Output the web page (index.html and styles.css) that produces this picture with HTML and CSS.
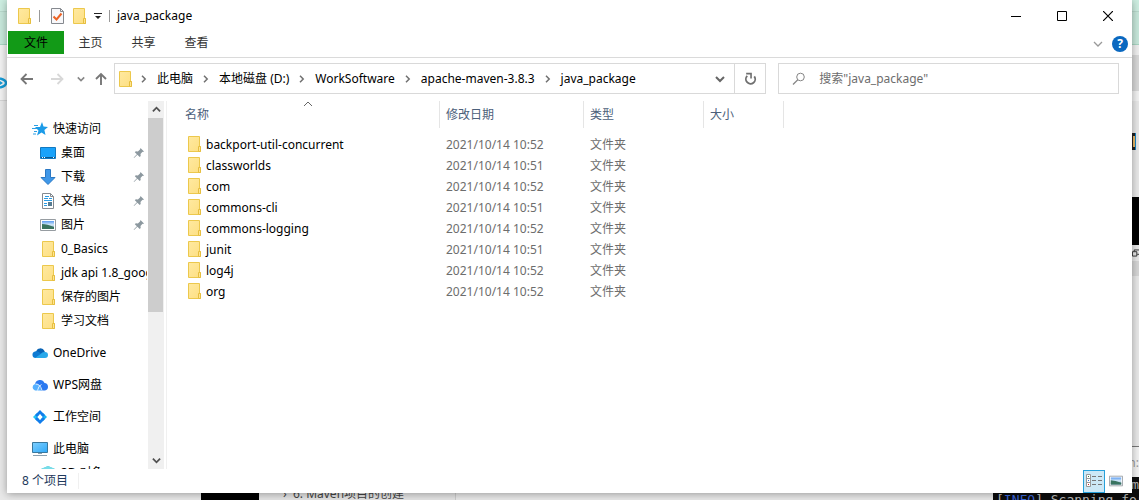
FILE: index.html
```html
<!DOCTYPE html>
<html lang="zh-CN">
<head>
<meta charset="utf-8">
<title>java_package</title>
<link rel="stylesheet" href="styles.css">
</head>
<body>
<svg class="defs" aria-hidden="true">
  <defs>
    <linearGradient id="fold" x1="0" y1="0" x2="1" y2="1"><stop offset="0" stop-color="#ffe9a0"/><stop offset="1" stop-color="#fddf82"/></linearGradient>
    <linearGradient id="sky" x1="0" y1="0" x2="0" y2="1"><stop offset="0" stop-color="#5b9bf0"/><stop offset=".5" stop-color="#d8ecf8"/><stop offset="1" stop-color="#3d6f8e"/></linearGradient>
    <linearGradient id="screen" x1="0" y1="0" x2="1" y2="1"><stop offset="0" stop-color="#7fd0ff"/><stop offset="1" stop-color="#2fa8f8"/></linearGradient>
    <symbol id="folder" viewBox="0 0 16 16"><path d="M2.500.500h11v10h1v5h-12z" fill="url(#fold)" stroke="#ecc84c"/><path d="M12.500 15.500v-5h2v5z" fill="#ffe591" stroke="#e6be40"/></symbol>
    <symbol id="pin" viewBox="0 0 12 12"><path d="M7.500 1l3.500 3.500-1 .5-.5-.2-2 2.200.2 2-1 1-2.300-2.300L1 11l-.3-.4L3.900 7.300 1.800 5.200l1-1 2.100.2L7 2.500z" fill="#8c989f"/></symbol>
    <symbol id="sep" viewBox="0 0 8 8"><path d="M2 .8L5.200 4 2 7.200" fill="none" stroke="#707070" stroke-width="1.500"/></symbol>
    <symbol id="down" viewBox="0 0 10 10"><path d="M1 3l4 4 4-4" fill="none" stroke="currentColor" stroke-width="2"/></symbol>
    <symbol id="picture" viewBox="0 0 16 16"><path d="M.5 2.500h15v11H.5z" fill="#fff" stroke="#969ca1"/><path d="M2 4h12v8H2z" fill="url(#sky)"/><path d="M2 7q5 0 12 3v2H2z" fill="#39735f"/></symbol>
  </defs>
</svg>
<div class="desktop">
  <div class="left-page"></div>
  <svg class="left-logo" viewBox="0 0 8 14" aria-hidden="true"><path d="M0 2.500q6 1.500 6 4.500t-6 4.500" fill="none" stroke="#149bd7" stroke-width="2.500"/><path d="M0 5l3 2-3 2z" fill="#149bd7"/></svg>
  <div class="right-page"></div>
  <div class="right-tile"></div>
  <div class="right-block"></div>
  <svg class="right-copy" viewBox="0 0 8 8" aria-hidden="true"><path d="M.5 2.500h5v5h-5zM2.500 2V.5H8M6 5.500h2" fill="none" stroke="#222"/></svg>
  <div class="bottom-block"></div>
  <div class="bottom-note">&#8250;&nbsp; 6. Maven项目的创建</div>
  <div class="terminal">
    <div class="terminal-bar">n:</div>
    <div class="terminal-body"><div class="terminal-last">m</div><div>[<b>INFO</b>] Scanning for</div></div>
  </div>

  <main class="window">
    <header class="title-bar">
      <svg class="icon" aria-hidden="true"><use href="#folder"/></svg>
      <i class="rule"></i>
      <button class="plain" aria-label="属性"><svg class="icon" viewBox="0 0 16 16"><path d="M2.500.500h9l3 3v12h-12z" fill="#f8f8fa" stroke="#85898f"/><path d="M11.500.500v3h3" fill="none" stroke="#85898f"/><path d="M4.500 8.500l3 3 5-6" fill="none" stroke="#ec6325" stroke-width="2"/></svg></button>
      <button class="plain new-folder" aria-label="新建文件夹"><svg class="icon"><use href="#folder"/></svg></button>
      <button class="plain customize" aria-label="自定义快速访问工具栏"><svg viewBox="0 0 8 8"><path d="M0 1h8v1H0zM1 4h6L4 7z" fill="#222"/></svg></button>
      <i class="rule"></i>
      <h1>java_package</h1>
      <div class="caption">
        <button aria-label="最小化"><svg viewBox="0 0 10 10"><path d="M0 5.500h10" stroke="#000"/></svg></button>
        <button aria-label="最大化"><svg viewBox="0 0 10 10"><path d="M.5.500h9v9h-9z" fill="none" stroke="#000"/></svg></button>
        <button aria-label="关闭"><svg viewBox="0 0 10 10"><path d="M0 0l10 10M10 0L0 10" stroke="#000" stroke-width="1.200"/></svg></button>
      </div>
    </header>

    <nav class="tabs">
      <button class="file-tab">文件</button>
      <button>主页</button>
      <button>共享</button>
      <button>查看</button>
      <div class="tab-tools">
        <button aria-label="展开功能区"><svg viewBox="0 0 10 10"><path d="M1 3l4 4 4-4" fill="none" stroke="#999" stroke-width="1.300"/></svg></button>
        <button class="help" aria-label="帮助">?</button>
      </div>
    </nav>

    <div class="nav-bar">
      <button class="plain back" aria-label="后退"><svg viewBox="0 0 14 14"><path d="M13 7H2M6.500 2L1.500 7l5 5" fill="none" stroke="#777" stroke-width="1.800"/></svg></button>
      <button class="plain forward" aria-label="前进"><svg viewBox="0 0 14 14"><path d="M1 7h11M7.500 2l5 5-5 5" fill="none" stroke="#d8d8d8" stroke-width="1.800"/></svg></button>
      <button class="plain recent" aria-label="最近浏览的位置"><svg viewBox="0 0 10 10"><use href="#down"/></svg></button>
      <button class="plain up" aria-label="上移"><svg viewBox="0 0 14 14"><path d="M7 13V2M2 7l5-5 5 5" fill="none" stroke="#777" stroke-width="1.900"/></svg></button>
      <div class="address">
        <svg class="icon" aria-hidden="true"><use href="#folder"/></svg>
        <svg class="sep"><use href="#sep"/></svg><a href="#">此电脑</a>
        <svg class="sep"><use href="#sep"/></svg><a href="#">本地磁盘 (D:)</a>
        <svg class="sep"><use href="#sep"/></svg><a href="#">WorkSoftware</a>
        <svg class="sep"><use href="#sep"/></svg><a href="#">apache-maven-3.8.3</a>
        <svg class="sep"><use href="#sep"/></svg><a href="#">java_package</a>
        <button class="plain history" aria-label="以前的位置"><svg viewBox="0 0 10 10"><use href="#down"/></svg></button>
        <button class="plain refresh" aria-label="刷新"><svg viewBox="0 0 12 12"><path d="M3 3.500A4.300 4.300 0 1 0 9.500 4" fill="none" stroke="#707070" stroke-width="1.700"/><path d="M2 1.500h4.500V6" fill="none" stroke="#707070" stroke-width="1.500"/></svg></button>
      </div>
      <label class="search">
        <svg viewBox="0 0 14 14" aria-hidden="true"><circle cx="8.500" cy="5" r="3.800" fill="none" stroke="#858585"/><path d="M5.800 7.800L1 12.500" stroke="#858585" stroke-width="1.200"/></svg>
        <input type="text" aria-label="搜索" placeholder='搜索"java_package"'>
      </label>
    </div>

    <div class="content">
      <aside class="sidebar">
        <ul class="tree">
          <li class="root quick"><svg class="icon" viewBox="0 0 16 16"><path d="M10 1l1.500 4.500 4.500.5-3.600 3 1.100 5L9.500 11.400 5 14.500l1.500-5L3 6h5z" fill="#1b9be8"/><path d="M2 4.500h4M0 7.500h5M2 10.500h3M1 13h3" stroke="#2c9fe4"/></svg><a href="#">快速访问</a></li>
          <li><svg class="icon" viewBox="0 0 16 16"><path d="M.5 2.500h15v11H.5z" fill="#19a2fa" stroke="#1279c0"/><path d="M1 12.500h14" stroke="#07568e"/><path d="M2 12.500h1m1 0h1m8 0h1" stroke="#fff"/></svg><a href="#">桌面</a><svg class="pin"><use href="#pin"/></svg></li>
          <li><svg class="icon" viewBox="0 0 16 16"><path d="M5.500.500h5v8h4.500L8 15.500 1 8.500h4.500z" fill="#3f97e8" stroke="#2a78c4"/></svg><a href="#">下载</a><svg class="pin"><use href="#pin"/></svg></li>
          <li><svg class="icon" viewBox="0 0 16 16"><path d="M2.500.500h8l3 3v12h-11z" fill="#fff" stroke="#848a90"/><path d="M10.500.500v3h3" fill="none" stroke="#848a90"/><path d="M5 3.500h4M4 5.500h4m1 0h3M4 7.500h8M4 10.500h3M4 12.500h3" stroke="#2a9be3"/><path d="M8 9h4v4H8z" fill="#567b91"/></svg><a href="#">文档</a><svg class="pin"><use href="#pin"/></svg></li>
          <li><svg class="icon"><use href="#picture"/></svg><a href="#">图片</a><svg class="pin"><use href="#pin"/></svg></li>
          <li><svg class="icon"><use href="#folder"/></svg><a href="#">0_Basics</a></li>
          <li><svg class="icon"><use href="#folder"/></svg><a href="#">jdk api 1.8_google</a></li>
          <li><svg class="icon"><use href="#folder"/></svg><a href="#">保存的图片</a></li>
          <li><svg class="icon"><use href="#folder"/></svg><a href="#">学习文档</a></li>
          <li class="root"><svg class="icon" viewBox="0 0 16 16"><path d="M4 7a4.500 4.500 0 0 1 8.500-1l1 3-7 3-5-2z" fill="#0863b5"/><path d="M3.500 13A3.300 3.300 0 0 1 3 6.500c3-1 4 1 6 2l-3 4.500z" fill="#0e7ad2"/><path d="M3 13l6-4.300c1-1 2-2 4-1.700a3 3 0 0 1 0 6z" fill="#28a8ea"/></svg><a href="#">OneDrive</a></li>
          <li class="root"><svg class="icon" viewBox="0 0 16 16"><path d="M3 7a5 5 0 0 1 9.500-1 3.800 3.800 0 0 1 .5 7.500H9z" fill="#2b79f0"/><path d="M3 13.500a3.400 3.400 0 0 1 0-6.500c3-.7 5 1 6.500 6.500z" fill="#55b0ff"/><path d="M3.500 7q5 0 6.500 6.500M9.500 7.500q-3 1-4 6" fill="none" stroke="#fff" stroke-width=".8"/></svg><a href="#">WPS网盘</a></li>
          <li class="root"><svg class="icon" viewBox="0 0 16 16"><path d="M1 8l4-4 2 2-2 2 2 2-2 2z" fill="#21c6f5"/><path d="M15 8l-4 4-2-2 2-2-2-2 2-2z" fill="#16b5f2"/><path d="M8 1l5 5-2 2-3-3-3 3-2-2zM8 15l5-5-2-2-3 3-3-3-2 2z" fill="#127deb"/></svg><a href="#">工作空间</a></li>
          <li class="root"><svg class="icon" viewBox="0 0 16 16"><path d="M.5 1.500h15v10H.5z" fill="url(#screen)" stroke="#38789e"/><path d="M6 12.500h4M1 14.500h14" stroke="#8aa0af"/></svg><a href="#">此电脑</a></li>
          <li><svg class="icon" viewBox="0 0 16 16"><path d="M8 1l7 3v8l-7 3-7-3V4z" fill="#49c4d8"/><path d="M8 1l7 3-7 3-7-3z" fill="#78dde8"/></svg><a href="#">3D 对象</a></li>
        </ul>
        <div class="scrollbar">
          <button class="plain" aria-label="向上滚动"><svg viewBox="0 0 10 10"><path d="M1 7l4-4 4 4" fill="none" stroke="#505050" stroke-width="2"/></svg></button>
          <div class="track"><div class="thumb"></div></div>
          <button class="plain" aria-label="向下滚动"><svg viewBox="0 0 10 10"><use href="#down"/></svg></button>
        </div>
      </aside>
      <section class="files">
        <table>
          <colgroup><col class="c-name"><col class="c-date"><col class="c-type"><col class="c-size"><col></colgroup>
          <thead><tr><th class="name">名称<svg class="sort" viewBox="0 0 10 6"><path d="M1 5l4-4 4 4" fill="none" stroke="#666"/></svg></th><th>修改日期</th><th>类型</th><th>大小</th><td></td></tr></thead>
          <tbody>
            <tr><td class="name"><svg class="icon"><use href="#folder"/></svg>backport-util-concurrent</td><td>2021/10/14 10:52</td><td>文件夹</td><td></td><td></td></tr>
            <tr><td class="name"><svg class="icon"><use href="#folder"/></svg>classworlds</td><td>2021/10/14 10:51</td><td>文件夹</td><td></td><td></td></tr>
            <tr><td class="name"><svg class="icon"><use href="#folder"/></svg>com</td><td>2021/10/14 10:52</td><td>文件夹</td><td></td><td></td></tr>
            <tr><td class="name"><svg class="icon"><use href="#folder"/></svg>commons-cli</td><td>2021/10/14 10:51</td><td>文件夹</td><td></td><td></td></tr>
            <tr><td class="name"><svg class="icon"><use href="#folder"/></svg>commons-logging</td><td>2021/10/14 10:52</td><td>文件夹</td><td></td><td></td></tr>
            <tr><td class="name"><svg class="icon"><use href="#folder"/></svg>junit</td><td>2021/10/14 10:51</td><td>文件夹</td><td></td><td></td></tr>
            <tr><td class="name"><svg class="icon"><use href="#folder"/></svg>log4j</td><td>2021/10/14 10:52</td><td>文件夹</td><td></td><td></td></tr>
            <tr><td class="name"><svg class="icon"><use href="#folder"/></svg>org</td><td>2021/10/14 10:52</td><td>文件夹</td><td></td><td></td></tr>
          </tbody>
        </table>
      </section>
    </div>

    <footer class="status">
      <span>8 个项目</span>
      <div class="views">
        <button class="on" aria-label="详细信息"><svg class="icon" viewBox="0 0 16 16"><path d="M.5 1.500h4v12h-4zM.5 5.500h4M.5 9.500h4" fill="#fff" stroke="#999"/><path d="M2 3.500h1" stroke="#3a7d3a"/><path d="M2 7.500h1" stroke="#2f6fd0"/><path d="M2 11.500h1" stroke="#d02020"/><path d="M6 3.500h4m2 0h4M6 7.500h4m2 0h4M6 11.500h4m2 0h4" stroke="#777"/></svg></button>
        <button aria-label="大缩略图"><svg class="thumbs"><use href="#picture"/></svg></button>
      </div>
    </footer>
  </main>
</div>
</body>
</html>
```

FILE: styles.css
```css
* { box-sizing: border-box; }
body {
  margin: 0;
  font: 12px/16px "Noto Sans", "Noto Sans CJK SC", sans-serif;
  color: #000;
}
button, input { font: inherit; color: inherit; border: 0; padding: 0; background: none; }
a { color: inherit; text-decoration: none; }
svg { display: block; flex: none; }
.defs { position: absolute; width: 0; height: 0; }
.icon { width: 16px; height: 16px; }
.plain { display: flex; align-items: center; justify-content: center; }

.desktop {
  position: relative;
  display: flex;
  height: 100vh;
  padding: 0 7px 7px;
  overflow: hidden;
  background: #e8e8e8;
}

/* Windows and pages lying behind the explorer window */
.left-page, .right-page, .left-logo, .right-tile, .right-block, .right-copy, .bottom-block, .bottom-note, .terminal { position: absolute; }
.left-page {
  left: 0; top: 0; width: 10px; height: 101px;
  border-bottom: 1px solid #d4d4d4;
  background: linear-gradient(#cdeee1 11px, #b9dacd 11px 12px, #c7e8db 12px 44px, #a9d6c3 44px 45px, #f2f2f2 45px);
}
.left-logo { left: 0; top: 76px; width: 8px; height: 14px; }
.right-page {
  right: 0; top: 0; width: 10px; bottom: 0;
  background: linear-gradient(#cdeee1 11px, #b9dacd 11px 12px, #c7e8db 12px 44px, #a9d6c3 44px 45px, #efefef 45px 55px, #d8d8d8 55px 91px, #f2f2f2 91px 101px, #e8e8e8 101px 261px, #d6d6d6 261px 276px, #e8e8e8 276px);
}
.right-tile { right: 3px; top: 133px; width: 6px; height: 17px; background: #222; border-right: 1px solid #1684c8; }
.right-tile::after { content: ""; display: block; width: 2px; height: 11px; margin: 3px 0 0 3px; background: #e8b765; }
.right-block { right: 0; top: 197px; width: 8px; height: 48px; background: #000; }
.right-copy { right: 0; top: 249px; width: 7px; height: 8px; }
.bottom-block { left: 201px; bottom: 0; width: 58px; height: 12px; background: #000; }
.bottom-note { left: 259px; top: 486px; width: 197px; height: 16px; padding-left: 24px; border-right: 1px solid #ccc; background: #e4e4e4; color: #444; }
.terminal { right: 0; top: 446px; width: 146px; height: 54px; border-top: 1px solid #777; background: #f2f2f2; overflow: hidden; }
.terminal-bar { height: 30px; padding-top: 8px; text-align: right; color: #999; }
.terminal-body { height: 30px; padding-left: 3px; background: #0c0c0c; color: #bbb; font: 13px/15px "DejaVu Sans Mono", monospace; white-space: nowrap; }
.terminal-body b { font-weight: 400; color: #3b67dd; }
.terminal-last { text-align: right; }

.window {
  position: relative;
  flex: 1;
  min-width: 0;
  display: flex;
  flex-direction: column;
  background: #fff;
  box-shadow: 0 1px 8px rgba(0, 0, 0, .35);
}

.title-bar { display: flex; align-items: center; height: 31px; padding: 0 1px 0 9px; }
.rule { width: 1px; height: 12px; background: #999; }
.title-bar > .icon { margin-right: 7px; }
.title-bar .rule + .plain { margin-left: 9px; }
.new-folder { margin-left: 6px; }
.customize { margin: 0 7px; }
.customize svg { width: 8px; height: 8px; }
h1 { margin: 0 0 0 7px; font: inherit; font-size: 12px; }
.caption { display: flex; margin-left: auto; }
.caption button { display: grid; place-items: center; width: 46px; height: 31px; }
.caption svg { width: 10px; height: 10px; }

.tabs { display: flex; align-items: center; height: 27px; padding: 0 4px 3px 1px; border-bottom: 1px solid #dadada; color: #333; }
.tabs > button { width: 53px; height: 23px; padding-top: 1px; }
.tabs > .file-tab { width: 56px; background: #129a17; color: #000; }
.tab-tools { display: flex; align-items: center; gap: 9px; margin-left: auto; padding-top: 2px; }
.tab-tools svg { width: 10px; height: 10px; }
.help { width: 16px; height: 16px; border-radius: 50%; background: #0a68c0; color: #fff; font-weight: 700; }

.nav-bar { display: flex; align-items: center; height: 43px; padding: 0 13px 2px 13px; }
.nav-bar > .plain svg { width: 14px; height: 14px; }
.forward { margin-left: 16px; }
.nav-bar > .recent { margin: 0 9px 0 13px; color: #888; }
.nav-bar > .recent svg { width: 8px; height: 8px; }
.address { flex: 1; display: flex; align-items: center; min-width: 0; height: 31px; margin: 0 12px 0 6px; padding-left: 2px; border: 1px solid #d9d9d9; white-space: nowrap; }
.sep { width: 8px; height: 8px; margin: 0 9px; }
.icon + .sep { margin-left: 7px; }
.history { margin-left: auto; width: 29px; height: 29px; color: #666; }
.history svg { width: 10px; height: 10px; }
.refresh { width: 31px; height: 29px; border-left: 1px solid #d9d9d9; }
.refresh svg { width: 13px; height: 13px; }
.search { flex: none; width: 31%; display: flex; align-items: center; gap: 13px; height: 31px; padding-left: 13px; border: 1px solid #d9d9d9; }
.search svg { width: 14px; height: 14px; }
.search input { flex: 1; min-width: 0; outline: 0; }
.search input::placeholder { color: #6d6d6d; opacity: 1; }

.content { flex: 1; display: flex; min-height: 0; }
.sidebar { flex: none; display: flex; width: 160px; border-right: 1px solid #f0f0f0; padding-right: 2px; }
.tree { flex: 1; min-width: 0; margin: 0; padding: 16px 1px 0 0; list-style: none; overflow: hidden; }
.tree li { display: flex; align-items: center; gap: 5px; height: 24px; padding-left: 33px; white-space: nowrap; overflow: hidden; }
.tree .root { margin-top: 8px; padding-left: 25px; }
.tree .quick { margin-top: 0; }
.pin { width: 12px; height: 12px; margin: 0 2px 0 auto; }
.scrollbar { display: flex; flex-direction: column; width: 16px; background: #f0f0f0; color: #505050; }
.scrollbar button { height: 17px; }
.scrollbar svg { width: 9px; height: 9px; }
.track { flex: 1; }
.thumb { width: 15px; height: 58%; background: #cdcdcd; }

.files { flex: 1; min-width: 0; overflow: hidden; }
table { width: 100%; table-layout: fixed; border-collapse: separate; border-spacing: 0; color: #6d6d6d; }
.c-name { width: 273px; }
.c-date { width: 144px; }
.c-type { width: 120px; }
.c-size { width: 80px; }
th { position: relative; height: 27px; padding: 0 0 0 6px; border-right: 1px solid #e5e5e5; text-align: left; font-weight: 400; color: #4c607a; }
th.name { padding-left: 18px; }
.sort { position: absolute; left: 50%; top: 0; width: 10px; height: 6px; }
tbody::before { content: ""; display: block; height: 6px; }
tbody td { height: 21px; padding: 0 0 0 6px; white-space: nowrap; }
tbody .name { padding-left: 19px; color: #000; }
.name .icon { display: inline-block; margin-right: 4px; vertical-align: -3px; }

.status { display: flex; align-items: center; justify-content: space-between; height: 24px; padding: 0 5px 0 15px; color: #1e395b; }
.status span { padding-right: 10px; border-right: 1px solid #f0f0f0; }
.views { display: flex; }
.views button { display: grid; place-items: center; width: 22px; height: 23px; }
.views .on { border: 1px solid #26a0da; background: #cce8f6; }
.thumbs { width: 14px; height: 14px; }
```
